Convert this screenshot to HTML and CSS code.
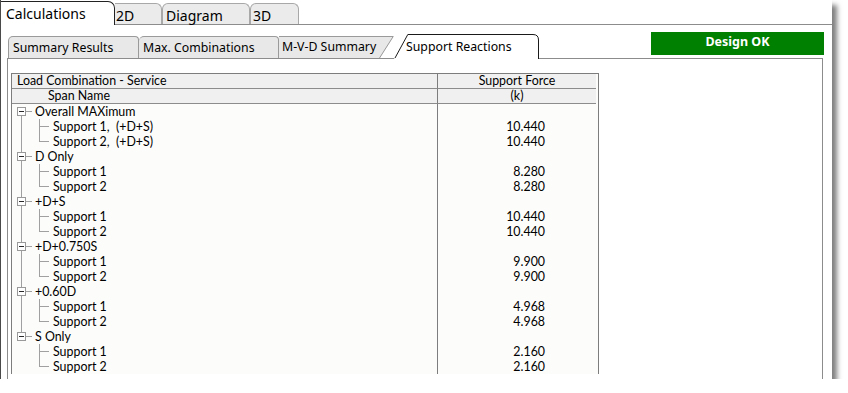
FILE: index.html
```html
<!DOCTYPE html>
<html lang="en">
<head>
    <meta charset="UTF-8">
    <title>Calculations - Support Reactions</title>
    <link rel="stylesheet" href="styles.css">
</head>
<body>
    <div class="window">
        <div class="top-tabs">
            <div class="top-tab active">Calculations</div>
            <div class="top-tab tab-2d">2D</div>
            <div class="top-tab tab-diagram">Diagram</div>
            <div class="top-tab tab-3d">3D</div>
        </div>

        <div class="page">
            <div class="sub-head">
                <div class="sub-tabs">
                    <div class="sub-tab first">Summary Results</div>
                    <div class="sub-tab">Max. Combinations</div>
                    <div class="sub-tab slanted">
                        <svg class="tab-shape" width="115" height="22">
                            <polygon points="0,0 115,0 101,22 0,22" fill="#e8e8e8"/>
                            <polyline points="0,0.5 114.2,0.5 100.5,22" fill="none" stroke="#9a9a9a"/>
                        </svg>
                        <span>M-V-D Summary</span>
                    </div>
                    <div class="sub-tab current">
                        <svg class="tab-shape" width="145" height="25">
                            <path d="M0,25 L13.5,0.5 L139,0.5 Q144.5,0.5 144.5,6 L144.5,25 Z" fill="#fff"/>
                            <path d="M1,24 L13.8,0.5 L139,0.5 Q144.5,0.5 144.5,6 L144.5,25" fill="none" stroke="#1a1a1a"/>
                        </svg>
                        <span>Support Reactions</span>
                    </div>
                </div>
                <div class="status">Design OK</div>
            </div>

            <div class="panel">
                <div class="grid">
                    <div class="hd">Load Combination - Service</div>
                    <div class="hd val-hd">Support Force</div>
                    <div class="hd span-hd">Span Name</div>
                    <div class="hd val-hd">(k)</div>

                    <div class="t p first"><span class="box"></span>Overall MAXimum</div><div class="v"></div>
                    <div class="t c">Support 1,&nbsp; (+D+S)</div><div class="v">10.440</div>
                    <div class="t c end">Support 2,&nbsp; (+D+S)</div><div class="v">10.440</div>

                    <div class="t p"><span class="box"></span>D Only</div><div class="v"></div>
                    <div class="t c">Support 1</div><div class="v">8.280</div>
                    <div class="t c end">Support 2</div><div class="v">8.280</div>

                    <div class="t p"><span class="box"></span>+D+S</div><div class="v"></div>
                    <div class="t c">Support 1</div><div class="v">10.440</div>
                    <div class="t c end">Support 2</div><div class="v">10.440</div>

                    <div class="t p"><span class="box"></span>+D+0.750S</div><div class="v"></div>
                    <div class="t c">Support 1</div><div class="v">9.900</div>
                    <div class="t c end">Support 2</div><div class="v">9.900</div>

                    <div class="t p"><span class="box"></span>+0.60D</div><div class="v"></div>
                    <div class="t c">Support 1</div><div class="v">4.968</div>
                    <div class="t c end">Support 2</div><div class="v">4.968</div>

                    <div class="t p last"><span class="box"></span>S Only</div><div class="v"></div>
                    <div class="t c tail">Support 1</div><div class="v">2.160</div>
                    <div class="t c tail end">Support 2</div><div class="v">2.160</div>
                </div>
            </div>
        </div>
    </div>
</body>
</html>
```

FILE: styles.css
```css
/* Window */
body {
    margin: 0;
    background: #fff;
    font-family: "Noto Sans", sans-serif;
    color: #000;
}

.window {
    width: 832px;
    height: 379px;
    box-sizing: border-box;
    border-left: 1px solid #4a4a4a;
    background: #fff;
    box-shadow: 5px 5px 5px rgba(0, 0, 0, 0.5);
    overflow: hidden;
}

/* Top tab strip */
.top-tabs {
    display: flex;
    align-items: flex-end;
    height: 25px;
    box-sizing: border-box;
    border-bottom: 1px solid #8c8c8c;
}

.top-tab {
    box-sizing: border-box;
    height: 21px;
    border: 1px solid #a8a8a8;
    border-bottom: none;
    border-radius: 6px 6px 0 0;
    background: #ebebeb;
    font-size: 14px;
    line-height: 23px;
}

.top-tab.active {
    width: 114px;
    height: 24px;
    margin-bottom: -1px;
    padding-left: 5px;
    border: none;
    border-top: 1px solid #222;
    border-right: 1px solid #222;
    border-radius: 0 7px 0 0;
    background: #fff;
    font-size: 14px;
    line-height: 24px;
}

.tab-2d {
    width: 47px;
    border-left: none;
    border-radius: 0 6px 0 0;
    padding-left: 1px;
}

.tab-diagram {
    width: 88px;
    padding-left: 3px;
}

.tab-3d {
    width: 49px;
    padding-left: 2px;
}

/* Page below top tabs */
.page {
    padding: 0 8px 0 6px;
}

.sub-head {
    display: flex;
    justify-content: space-between;
    height: 34px;
    margin-bottom: -1px;
    position: relative;
    z-index: 1;
}

.sub-tabs {
    display: flex;
    align-items: flex-end;
    margin-left: 1px;
}

.sub-tab {
    box-sizing: border-box;
    height: 22px;
    margin-bottom: 1px;
    border: 1px solid #9a9a9a;
    border-left: none;
    border-bottom: none;
    border-radius: 5px 4px 0 0;
    background: #e8e8e8;
    font-size: 12.3px;
    line-height: 22px;
    padding-left: 4px;
}

.sub-tab.first {
    width: 131px;
    border-left: 1px solid #9a9a9a;
}

.sub-tab:nth-child(2) {
    width: 140px;
}

.sub-tab.slanted,
.sub-tab.current {
    position: relative;
    border: none;
    border-radius: 0;
    background: none;
}

.sub-tab.slanted {
    width: 115px;
    padding-left: 3px;
}

.sub-tab.current {
    width: 145px;
    height: 25px;
    margin-bottom: 0;
    padding-left: 12px;
    line-height: 25px;
}

.tab-shape {
    position: absolute;
    left: 0;
    top: 0;
}

.sub-tab span {
    position: relative;
}

.status {
    margin-top: 7px;
    width: 173px;
    height: 23px;
    background: #008000;
    color: #fff;
    font-weight: bold;
    font-size: 12.5px;
    text-align: center;
    line-height: 20px;
}

/* Panel with tree grid */
.panel {
    height: 330px;
    margin-right: 1px;
    padding: 14px 0 0 3px;
    border: 1px solid #8c8c8c;
    border-bottom: none;
}

.grid {
    display: grid;
    grid-template-columns: 425px 159px;
    width: 586px;
    border: 1px solid #7d7d7d;
    border-bottom: none;
    background: #fcfcfa;
    font-family: Lato, "Open Sans", sans-serif;
    font-size: 12.4px;
}

.hd {
    height: 14px;
    line-height: 14px;
    border-bottom: 1px solid #8c8c8c;
    background: #f0f0f0;
    padding-left: 5px;
}

.span-hd {
    padding-left: 36px;
}

.val-hd,
.v {
    border-left: 1px solid #7d7d7d;
}

.val-hd {
    padding-left: 0;
    text-align: center;
}

.v {
    height: 15px;
    line-height: 15px;
    text-align: right;
    padding-right: 51px;
}

/* Tree rows: lines drawn as background strokes */
.t {
    display: flex;
    align-items: center;
    height: 15px;
    white-space: nowrap;
    background-repeat: no-repeat;
    background-image: linear-gradient(#a0a0a0, #a0a0a0), linear-gradient(#a0a0a0, #a0a0a0), linear-gradient(#a0a0a0, #a0a0a0);
}

.t.p {
    padding-left: 5px;
    background-position: 9px 0, 14px 7px;
    background-size: 1px 15px, 6px 1px;
}

.t.p.first {
    background-position: 9px 7px, 14px 7px;
    background-size: 1px 8px, 6px 1px;
}

.t.p.last {
    background-position: 9px 0, 14px 7px;
    background-size: 1px 8px, 6px 1px;
}

.t.c {
    padding-left: 41px;
    background-position: 9px 0, 27px 0, 27px 7px;
    background-size: 1px 15px, 1px 15px, 10px 1px;
}

.t.c.end {
    background-size: 1px 15px, 1px 8px, 10px 1px;
}

.t.c.tail {
    background-size: 0 0, 1px 15px, 10px 1px;
}

.t.c.tail.end {
    background-size: 0 0, 1px 8px, 10px 1px;
}

.box {
    width: 9px;
    height: 9px;
    box-sizing: border-box;
    margin-right: 9px;
    border: 1px solid #999;
    background: #fff linear-gradient(#2a2a2a, #2a2a2a) no-repeat center / 5px 1px;
}
```
